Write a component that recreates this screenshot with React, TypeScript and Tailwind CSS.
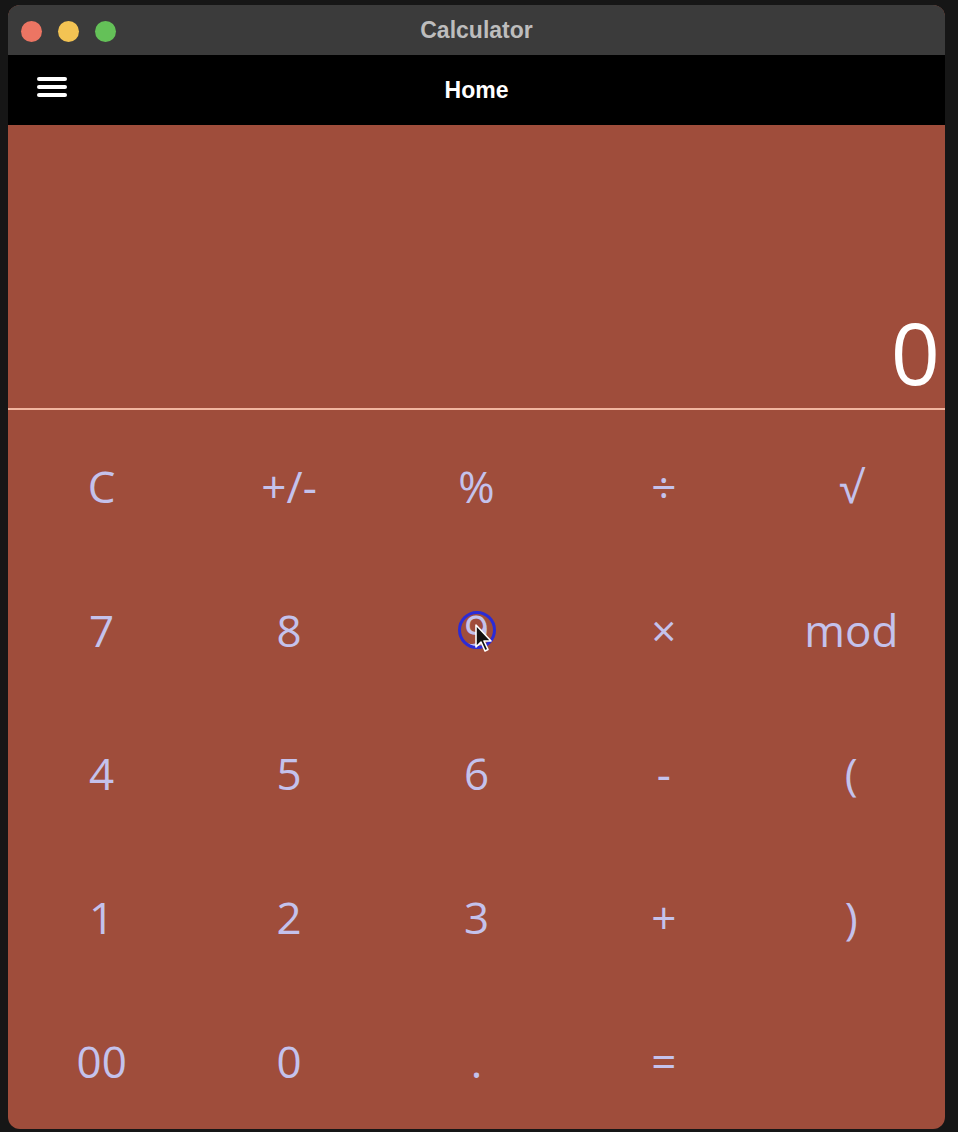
const keys: string[][] = [
  ['C', '+/-', '%', '÷', '√'],
  ['7', '8', '9', '×', 'mod'],
  ['4', '5', '6', '-', '('],
  ['1', '2', '3', '+', ')'],
  ['00', '0', '.', '=', ''],
];

function Key({ label }: { label: string }) {
  return (
    <div className="relative flex items-center justify-center text-[44px] text-[#c4c2ec] leading-none">
      <span className="pt-2">{label}</span>
      {label === '9' && (
        <>
          <span className="absolute left-1/2 top-1/2 -ml-[18px] -mt-[15px] h-[38px] w-[38px] rounded-full border-[3px] border-[#2b2bd6]" />
          <svg className="absolute left-1/2 top-1/2 ml-[-2px] mt-[-2px]" width="22" height="30" viewBox="0 0 22 30">
            <path d="M2 1 L2 23 L7 18 L11 27 L14 25.5 L10 17 L17 17 Z" fill="#111" stroke="#fff" strokeWidth="1.6" strokeLinejoin="round" />
          </svg>
        </>
      )}
    </div>
  );
}

export default function App() {
  return (
    <div className="h-[1132px] w-[958px] overflow-hidden bg-[#161616] pl-[8px] pt-[5px]" style={{ fontFamily: '"Open Sans", "Noto Sans", sans-serif' }}>
      <div className="flex h-[1124px] w-[937px] flex-col overflow-hidden rounded-[12px] bg-[#9f4d3b]">
        <div className="relative flex h-[50px] items-center justify-center bg-[#3b3b3b]">
          <div className="absolute left-[13px] top-[16px] flex gap-[16px]">
            <span className="h-[21px] w-[21px] rounded-full bg-[#ec7563]" />
            <span className="h-[21px] w-[21px] rounded-full bg-[#f3c353]" />
            <span className="h-[21px] w-[21px] rounded-full bg-[#64c158]" />
          </div>
          <span className="text-[23px] font-bold text-[#bdbdbd]" style={{ fontFamily: '"Liberation Sans", Arial, sans-serif' }}>Calculator</span>
        </div>
        <div className="relative flex h-[70px] items-center justify-center bg-black">
          <div className="absolute left-[29px] top-[22px] flex flex-col gap-[4px]">
            <span className="h-[4px] w-[30px] rounded-sm bg-white" />
            <span className="h-[4px] w-[30px] rounded-sm bg-white" />
            <span className="h-[4px] w-[30px] rounded-sm bg-white" />
          </div>
          <span className="text-[23px] font-bold text-white" style={{ fontFamily: '"Liberation Sans", Arial, sans-serif' }}>Home</span>
        </div>
        <div className="flex h-[285px] items-end justify-end border-b-2 border-[#f1b6a0] pr-[5px] pb-[13px]">
          <span className="text-[86px] leading-none text-white">0</span>
        </div>
        <div className="grid flex-1 grid-cols-5 grid-rows-5">
          {keys.flat().map((k, i) => (
            <Key key={i} label={k} />
          ))}
        </div>
      </div>
    </div>
  );
}
